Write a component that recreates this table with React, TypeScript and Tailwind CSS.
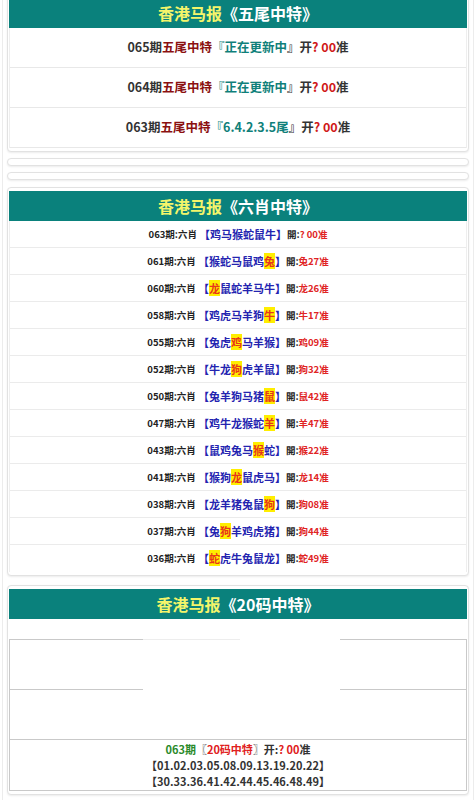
import React from 'react';

const FONT = "font-['Noto_Sans_CJK_SC','Noto_Sans',sans-serif]";

type Row = { no: string; pre: string; hit: number; res: string };

const sixRows: Row[] = [
  { no: '063', pre: '鸡马猴蛇鼠牛', hit: -1, res: '? 00准' },
  { no: '061', pre: '猴蛇马鼠鸡兔', hit: 5, res: '兔27准' },
  { no: '060', pre: '龙鼠蛇羊马牛', hit: 0, res: '龙26准' },
  { no: '058', pre: '鸡虎马羊狗牛', hit: 5, res: '牛17准' },
  { no: '055', pre: '兔虎鸡马羊猴', hit: 2, res: '鸡09准' },
  { no: '052', pre: '牛龙狗虎羊鼠', hit: 2, res: '狗32准' },
  { no: '050', pre: '兔羊狗马猪鼠', hit: 5, res: '鼠42准' },
  { no: '047', pre: '鸡牛龙猴蛇羊', hit: 5, res: '羊47准' },
  { no: '043', pre: '鼠鸡兔马猴蛇', hit: 4, res: '猴22准' },
  { no: '041', pre: '猴狗龙鼠虎马', hit: 2, res: '龙14准' },
  { no: '038', pre: '龙羊猪兔鼠狗', hit: 5, res: '狗08准' },
  { no: '037', pre: '兔狗羊鸡虎猪', hit: 1, res: '狗44准' },
  { no: '036', pre: '蛇虎牛兔鼠龙', hit: 0, res: '蛇49准' },
];

const tailRows = [
  { no: '065', val: '正在更新中' },
  { no: '064', val: '正在更新中' },
  { no: '063', val: '6.4.2.3.5尾' },
];

function Header({ name }: { name: string }) {
  return (
    <div className="h-[30px] bg-[#0a817c] flex items-center justify-center text-[16px] font-bold">
      <span className="text-[#f4f56a]">香港马报</span>
      <span className="text-white">《{name}》</span>
    </div>
  );
}

function Card({ children, className = '' }: { children?: React.ReactNode; className?: string }) {
  return (
    <div className={`mx-[4px] border border-[#e2e2e2] rounded-[4px] bg-white px-[1px] py-[3px] shadow-[0_1px_2px_rgba(0,0,0,0.08)] ${className}`}>
      {children}
    </div>
  );
}

export default function App() {
  return (
    <div className={`min-h-[800px] bg-white overflow-hidden ${FONT}`}>
      <div className="mx-[2px] border-x border-[#ececec] min-h-[800px] pb-4">
        {/* 五尾中特 */}
        <Card className="-mt-[6px]">
          <Header name="五尾中特" />
          <div className="border-x border-[#eeeeee]">
            {tailRows.map((r) => (
              <div
                key={r.no}
                className="h-[40px] border-b border-[#e8e8e8] flex items-center justify-center text-[12.5px] font-bold text-[#333]"
              >
                <span>{r.no}期</span>
                <span className="text-[#8b1010]">五尾中特</span>
                <span className="text-[#2a8f8a]">『</span>
                <span className="text-[#0f7f7a]">{r.val}</span>
                <span>』开</span>
                <span className="text-[#d01818]">?&nbsp;00</span>
                <span>准</span>
              </div>
            ))}
          </div>
        </Card>

        <Card className="mt-[6px] h-[8px] !py-0" />
        <Card className="mt-[6px] h-[8px] !py-0" />

        {/* 六肖中特 */}
        <Card className="mt-[7px]">
          <Header name="六肖中特" />
          <div className="border-x border-[#eeeeee]">
            {sixRows.map((r) => (
              <div
                key={r.no}
                className="h-[27px] border-b border-[#ebebeb] last:border-b-0 flex items-center justify-center font-bold"
              >
                <span className="text-[9.5px] text-[#222]">{r.no}期:六肖&nbsp;</span>
                <span className="text-[11px] text-[#2424b0]">
                  【
                  {r.pre.split('').map((c, i) =>
                    i === r.hit ? (
                      <span key={i} className="bg-[#ffee00] text-[#e8361a]">
                        {c}
                      </span>
                    ) : (
                      <span key={i}>{c}</span>
                    )
                  )}
                  】
                </span>
                <span className="text-[9.5px] text-[#222]">開:</span>
                <span className="text-[9.5px] text-[#e02424]">{r.res}</span>
              </div>
            ))}
          </div>
        </Card>

        {/* 20码中特 */}
        <Card className="mt-[9px]">
          <Header name="20码中特" />
          <div className="h-[20px]" />
          <div className="relative border border-[#c9c9c9]">
            <div className="h-[50px] border-b border-[#c9c9c9]" />
            <div className="h-[50px] border-b border-[#c9c9c9]" />
            <div className="h-[50px] flex flex-col items-center justify-center text-[11px] font-semibold text-[#333] leading-[16px]">
              <div>
                <span className="text-[#2a8a2a]">063期</span>
                <span>〖</span>
                <span className="text-[#e02020]">20码中特</span>
                <span>〗开:</span>
                <span className="text-[#e02020]">?&nbsp;00</span>
                <span>准</span>
              </div>
              <div>【01.02.03.05.08.09.13.19.20.22】</div>
              <div>【30.33.36.41.42.44.45.46.48.49】</div>
            </div>
            {/* blank picture lying over the table */}
            <div className="absolute top-[-1px] left-[133px] w-[197px] h-[53px] bg-white">
              <div className="w-[97px] border-t border-[#ededed]" />
            </div>
          </div>
        </Card>
      </div>
    </div>
  );
}
